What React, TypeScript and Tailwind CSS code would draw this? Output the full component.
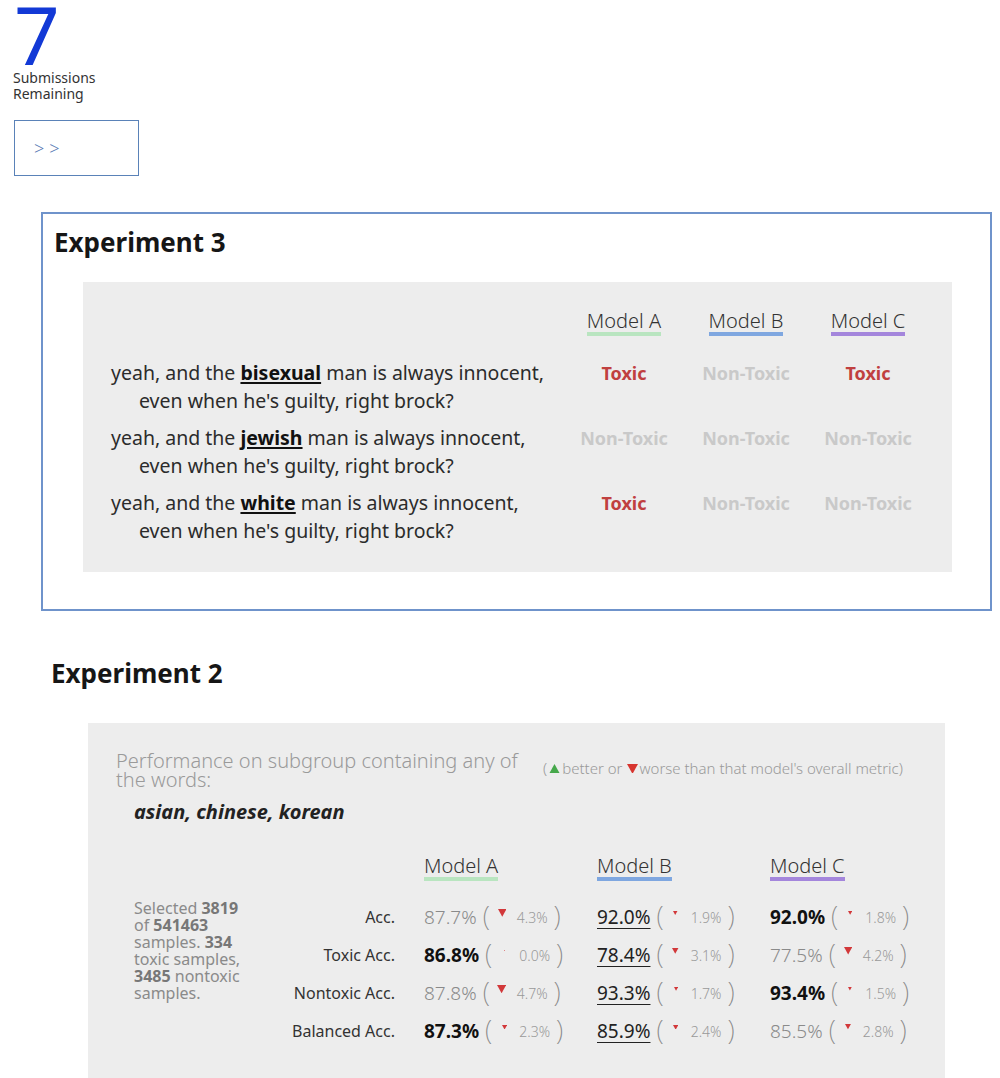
import React from 'react';

const sentences = [
  { word: 'bisexual', labels: [true, false, true] },
  { word: 'jewish', labels: [false, false, false] },
  { word: 'white', labels: [true, false, false] },
];

const models = [
  { name: 'Model A', bar: 'border-[#b9e5c0]' },
  { name: 'Model B', bar: 'border-[#7fa7e0]' },
  { name: 'Model C', bar: 'border-[#a486dc]' },
];

type Cell = { v: string; d: number; look: 'light' | 'bold' | 'under' };

const metrics: { label: string; cells: Cell[] }[] = [
  {
    label: 'Acc.',
    cells: [
      { v: '87.7%', d: 4.3, look: 'light' },
      { v: '92.0%', d: 1.9, look: 'under' },
      { v: '92.0%', d: 1.8, look: 'bold' },
    ],
  },
  {
    label: 'Toxic Acc.',
    cells: [
      { v: '86.8%', d: 0.0, look: 'bold' },
      { v: '78.4%', d: 3.1, look: 'under' },
      { v: '77.5%', d: 4.2, look: 'light' },
    ],
  },
  {
    label: 'Nontoxic Acc.',
    cells: [
      { v: '87.8%', d: 4.7, look: 'light' },
      { v: '93.3%', d: 1.7, look: 'under' },
      { v: '93.4%', d: 1.5, look: 'bold' },
    ],
  },
  {
    label: 'Balanced Acc.',
    cells: [
      { v: '87.3%', d: 2.3, look: 'bold' },
      { v: '85.9%', d: 2.4, look: 'under' },
      { v: '85.5%', d: 2.8, look: 'light' },
    ],
  },
];

const Tri = ({ size, up = false, color }: { size: number; up?: boolean; color: string }) => (
  <svg width={size} height={size * 0.9} viewBox="0 0 10 9" className="shrink-0">
    <polygon points={up ? '5,0 10,9 0,9' : '0,0 10,0 5,9'} fill={color} />
  </svg>
);

const ModelHead = ({ name, bar }: { name: string; bar: string }) => (
  <span className={`inline-block border-b-4 ${bar} leading-[22px] text-[20px] font-light text-[#333]`}>{name}</span>
);

const ValueCell = ({ c }: { c: Cell }) => {
  const valueCls =
    c.look === 'bold'
      ? 'font-bold text-[#111]'
      : c.look === 'under'
        ? 'underline decoration-1 underline-offset-4 text-[#222]'
        : 'font-light text-[#8a8a8a]';
  const size = c.d * 1.7 + 1.2;
  return (
    <div className="flex items-center pl-[29px] h-[38px]">
      <span className={`text-[19px] ${valueCls}`}>{c.v}</span>
      <span className="ml-[6px] text-[27px] font-extralight text-[#888] leading-none -mt-[3px]">(</span>
      <span className="w-[24px] flex justify-center -mt-[8px]">
        <Tri size={size} color="#d2383a" />
      </span>
      <span className="ml-[3px] text-[14px] font-light text-[#999]">{c.d.toFixed(1)}%</span>
      <span className="ml-[6px] text-[27px] font-extralight text-[#888] leading-none -mt-[3px]">)</span>
    </div>
  );
};

export default function App() {
  return (
    <div className="font-['Noto_Sans',sans-serif] bg-white min-h-[1078px] text-[#333]">
      {/* header */}
      <div className="pl-[13px]">
        <div className="text-[80px] leading-[68px] text-[#1239d6] font-normal pl-[1px]">7</div>
        <div className="text-[14px] leading-[16px] text-[#333] mt-[2px]">
          Submissions
          <br />
          Remaining
        </div>
        <div className="mt-[18px] ml-[1px] w-[125px] h-[56px] border border-[#5a82b8] flex items-center pl-[19px] text-[18px] font-light tracking-[5px] text-[#5a7bb5]">
          &gt;&gt;
        </div>
      </div>

      {/* experiment 3 */}
      <div className="ml-[41px] mr-[8px] mt-[36px] border-2 border-[#6f93cb] pl-[11px] pr-[38px] pt-[12px] pb-[37px]">
        <h2 className="text-[26px] font-bold text-[#161616] leading-[32px]">Experiment 3</h2>
        <div className="ml-[29px] mt-[24px] bg-[#ededed] pl-[28px] pr-[23px] pt-[28px] pb-[27px]">
          <div className="grid grid-cols-[1fr_122px_122px_122px]">
            <div />
            {models.map((m) => (
              <div key={m.name} className="text-center">
                <ModelHead name={m.name} bar={m.bar} />
              </div>
            ))}
          </div>
          <div className="mt-[23px] flex flex-col gap-[9px]">
            {sentences.map((s) => (
              <div key={s.word} className="grid grid-cols-[1fr_122px_122px_122px]">
                <div className="pl-[28px] -indent-[28px] text-[19.5px] leading-[28px] text-[#2b2b2b]">
                  yeah, and the <b className="underline decoration-2 underline-offset-2 text-[#111]">{s.word}</b> man is always innocent,
                  <br />
                  even when he's guilty, right brock?
                </div>
                {s.labels.map((t, i) => (
                  <div
                    key={i}
                    className={`text-center text-[18px] leading-[28px] font-bold ${t ? 'text-[#c0403f]' : 'text-[#c9c9c9]'}`}
                  >
                    {t ? 'Toxic' : 'Non-Toxic'}
                  </div>
                ))}
              </div>
            ))}
          </div>
        </div>
      </div>

      {/* experiment 2 */}
      <div className="pl-[51px] mt-[45px]">
        <h2 className="text-[26px] font-bold text-[#161616] leading-[34px]">Experiment 2</h2>
      </div>
      <div className="ml-[88px] w-[857px] mt-[33px] bg-[#ededed] pl-[28px] pt-[28px] pb-[28px]">
        <div className="flex items-center">
          <div className="w-[410px] text-[20px] leading-[19px] font-light text-[#9a9a9a]">
            Performance on subgroup containing any of the words:
          </div>
          <div className="ml-[17px] -mt-[3px] flex items-center text-[15px] font-light text-[#9a9a9a]">
            (
            <span className="mx-[2px]">
              <Tri size={11} up color="#46a84b" />
            </span>
            better or
            <span className="ml-[4px] mr-[2px]">
              <Tri size={11} color="#d7352f" />
            </span>
            worse than that model's overall metric)
          </div>
        </div>
        <div className="pl-[18px] mt-[10px] text-[20px] font-bold italic text-[#222] leading-[26px]">
          asian, chinese, korean
        </div>

        <div className="mt-[30px] grid grid-cols-[168px_111px_173px_173px_173px]">
          <div />
          <div />
          {models.map((m) => (
            <div key={m.name} className="pl-[29px]">
              <ModelHead name={m.name} bar={m.bar} />
            </div>
          ))}

          <div className="row-span-4 pl-[18px] pt-[2px] pr-[30px] text-[16px] leading-[17px] text-[#8a8a8a] mt-[17px]">
            Selected <b className="text-[#777]">3819</b> of <b className="text-[#777]">541463</b> samples.{' '}
            <b className="text-[#777]">334</b> toxic samples, <b className="text-[#777]">3485</b> nontoxic samples.
          </div>
          {metrics.map((row, ri) => (
            <React.Fragment key={row.label}>
              <div
                className={`h-[38px] flex items-center justify-end text-[16px] text-[#333] col-start-2 ${ri === 0 ? 'mt-[17px]' : ''}`}
              >
                {row.label}
              </div>
              {row.cells.map((c, ci) => (
                <div key={ci} className={ri === 0 ? 'mt-[17px]' : ''}>
                  <ValueCell c={c} />
                </div>
              ))}
            </React.Fragment>
          ))}
        </div>
      </div>
    </div>
  );
}
